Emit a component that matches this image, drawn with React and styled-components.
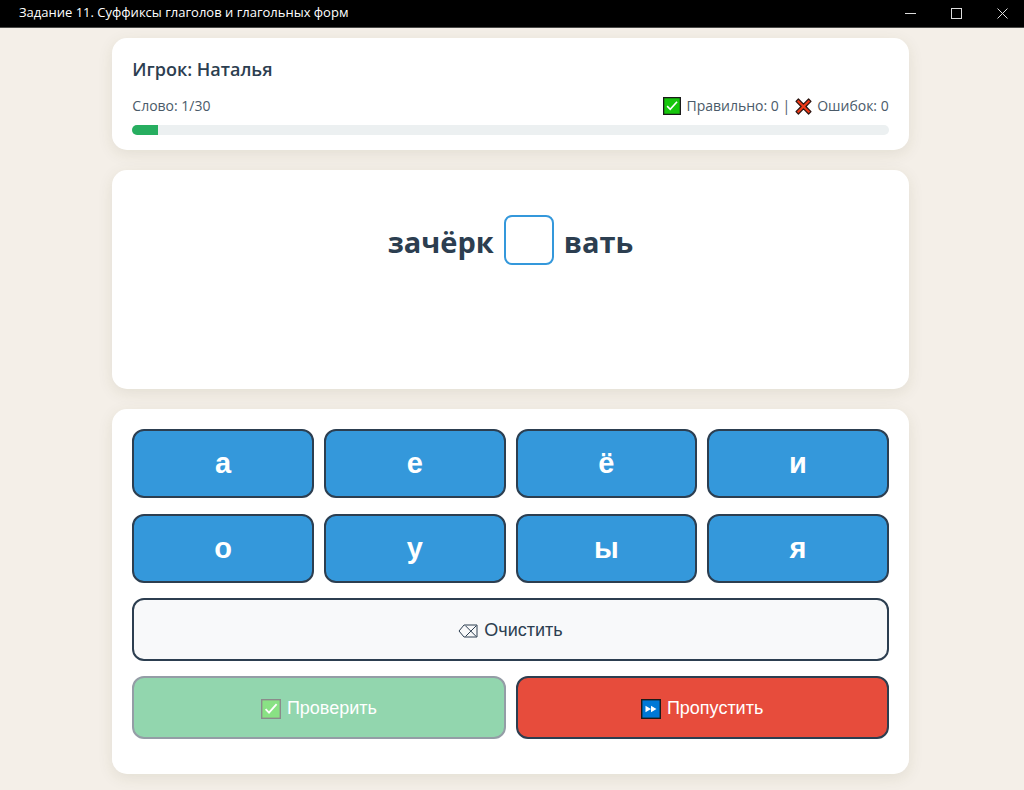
import React, { useState } from "react";
import styled, { createGlobalStyle } from "styled-components";

const GlobalStyle = createGlobalStyle`
  * {
    box-sizing: border-box;
  }

  body {
    margin: 0;
    background: #f4efe8;
    color: #2c3e50;
    font-family: "Open Sans", "Noto Sans", sans-serif;
  }
`;

const TitleBar = styled.header`
  display: flex;
  align-items: flex-start;
  justify-content: space-between;
  height: 28px;
  padding-left: 19px;
  background: #000;
  border-bottom: 1px solid #4a4a48;
  color: #fff;
`;

const WindowTitle = styled.span`
  font-size: 13px;
  line-height: 25px;
`;

const WindowControls = styled.div`
  display: flex;
  height: 100%;
`;

const WindowButton = styled.button`
  display: flex;
  align-items: center;
  justify-content: center;
  width: 46px;
  padding: 0 0 0 3px;
  border: none;
  background: transparent;
  color: #ddd;
`;

const Page = styled.main`
  display: flex;
  flex-direction: column;
  gap: 20px;
  width: 78%;
  max-width: 797px;
  margin: 0 auto;
  padding: 10px 0 16px;
`;

const Body = styled.div`
  padding-right: 3px;
`;

const Card = styled.section`
  padding: 20px;
  border-radius: 15px;
  background: #fff;
  box-shadow: 0 4px 15px rgba(80, 75, 30, 0.1);
`;

const HeaderCard = styled(Card)`
  padding-top: 16px;
  padding-bottom: 15px;
`;

const Player = styled.h1`
  margin: 0 0 12px;
  font-size: 18px;
  font-weight: 600;
  line-height: 30px;
`;

const Stats = styled.div`
  display: flex;
  justify-content: space-between;
  margin-bottom: 9px;
  color: #4a5a69;
  font-size: 14px;
  line-height: 20px;
`;

const Score = styled.div`
  display: flex;
  align-items: center;
  gap: 5px;
`;

const Track = styled.div`
  overflow: hidden;
  height: 10px;
  border-radius: 5px;
  background: #ecf0f1;
`;

const Fill = styled.div`
  height: 100%;
  background: #27ae60;
`;

const WordCard = styled(Card)`
  min-height: 219px;
  padding-top: 45px;
`;

const Word = styled.div`
  display: flex;
  align-items: center;
  justify-content: center;
  gap: 10px;
  font-size: 29px;
  font-weight: 700;
  line-height: 46px;
`;

const WordPart = styled.span`
  padding-top: 4px;
`;

const LetterBox = styled.input`
  width: 50px;
  height: 50px;
  padding: 0;
  border: 2px solid #3498db;
  border-radius: 8px;
  outline: none;
  background: #fff;
  color: #2c3e50;
  font: inherit;
  text-align: center;
`;

const KeysCard = styled(Card)`
  display: flex;
  flex-direction: column;
  gap: 15px;
  padding-bottom: 35px;
`;

const Letters = styled.div`
  display: grid;
  grid-template-columns: repeat(4, 1fr);
  gap: 16px 10px;
`;

const Actions = styled.div`
  display: grid;
  grid-template-columns: repeat(2, 1fr);
  gap: 10px;
`;

const Key = styled.button`
  height: 69px;
  padding: 0;
  border: 2px solid #2c3e50;
  border-radius: 12px;
  background: #3498db;
  color: #fff;
  font-family: "Liberation Sans", Arial, sans-serif;
  font-size: 29px;
  font-weight: 700;
  cursor: pointer;
`;

const kinds = {
  clear: { background: "#f8f9fa", color: "#2c3e50" },
  check: { background: "#27ae60", color: "#fff" },
  skip: { background: "#e74c3c", color: "#fff" },
};

const Action = styled.button`
  display: flex;
  align-items: center;
  justify-content: center;
  gap: 6px;
  height: 63px;
  padding: 2px 0 0;
  border: 2px solid #2c3e50;
  border-radius: 12px;
  background: ${({ $kind }) => kinds[$kind].background};
  color: ${({ $kind }) => kinds[$kind].color};
  font-family: "Liberation Sans", Arial, sans-serif;
  font-size: 18px;
  cursor: pointer;

  &:disabled {
    opacity: 0.5;
  }
`;

const CheckIcon = ({ size }) => (
  <svg width={size} height={size} viewBox="0 0 20 20" aria-hidden="true">
    <rect x="0.7" y="0.7" width="18.6" height="18.6" fill="#16c60c" stroke="#1a1a1a" strokeWidth="1.4" />
    <path d="M4.6 10.2 8 13.6 15.6 5.2" fill="none" stroke="#fff" strokeWidth="1.8" />
  </svg>
);

const CrossIcon = () => (
  <svg width="17" height="17" viewBox="0 0 17 17" aria-hidden="true">
    <path
      d="M3.4 1 8.5 6.1 13.6 1 16 3.4 10.9 8.5 16 13.6 13.6 16 8.5 10.9 3.4 16 1 13.6 6.1 8.5 1 3.4Z"
      fill="#f03a17"
      stroke="#2b1512"
      strokeWidth="1.2"
      strokeLinejoin="round"
    />
  </svg>
);

const SkipIcon = () => (
  <svg width="20" height="20" viewBox="0 0 20 20" aria-hidden="true">
    <rect x="0.7" y="0.7" width="18.6" height="18.6" fill="#0078d7" stroke="#1a1a1a" strokeWidth="1.4" />
    <path d="M4.5 6.8 10 10 4.5 13.2ZM10 6.8 15.5 10 10 13.2Z" fill="#fff" />
  </svg>
);

const EraseIcon = () => (
  <svg width="20" height="14" viewBox="0 0 20 14" aria-hidden="true">
    <path
      d="M6 1H19V13H6L1 7ZM7.5 1.8 18.2 12.5M18.2 1.8 7.5 12.5"
      fill="none"
      stroke="currentColor"
      strokeWidth="1"
    />
  </svg>
);

const letters = ["а", "е", "ё", "и", "о", "у", "ы", "я"];
const current = 1;
const total = 30;

const App = () => {
  const [letter, setLetter] = useState("");

  return (
    <>
      <GlobalStyle />
      <TitleBar>
        <WindowTitle>Задание 11. Суффиксы глаголов и глагольных форм</WindowTitle>
        <WindowControls>
          <WindowButton aria-label="Свернуть">
            <svg width="11" height="11" viewBox="0 0 11 11">
              <path d="M0 5.5H11" stroke="currentColor" />
            </svg>
          </WindowButton>
          <WindowButton aria-label="Развернуть">
            <svg width="11" height="11" viewBox="0 0 11 11">
              <rect x="0.5" y="0.5" width="10" height="10" fill="none" stroke="currentColor" />
            </svg>
          </WindowButton>
          <WindowButton aria-label="Закрыть">
            <svg width="11" height="11" viewBox="0 0 11 11">
              <path d="M0.5 0.5 10.5 10.5M10.5 0.5 0.5 10.5" stroke="currentColor" />
            </svg>
          </WindowButton>
        </WindowControls>
      </TitleBar>
      <Body>
        <Page>
          <HeaderCard>
            <Player>Игрок: Наталья</Player>
            <Stats>
              <span>
                Слово: {current}/{total}
              </span>
              <Score>
                <CheckIcon size={18} />
                <span>Правильно: 0 |</span>
                <CrossIcon />
                <span>Ошибок: 0</span>
              </Score>
            </Stats>
            <Track>
              <Fill style={{ width: `${(current / total) * 100}%` }} />
            </Track>
          </HeaderCard>

          <WordCard>
            <Word>
              <WordPart>зачёрк</WordPart>
              <LetterBox
                aria-label="Пропущенная буква"
                maxLength={1}
                value={letter}
                onChange={(e) => setLetter(e.target.value)}
              />
              <WordPart>вать</WordPart>
            </Word>
          </WordCard>

          <KeysCard>
            <Letters>
              {letters.map((item) => (
                <Key key={item} onClick={() => setLetter(item)}>
                  {item}
                </Key>
              ))}
            </Letters>
            <Action $kind="clear" onClick={() => setLetter("")}>
              <EraseIcon />
              Очистить
            </Action>
            <Actions>
              <Action $kind="check" disabled={!letter}>
                <CheckIcon size={20} />
                Проверить
              </Action>
              <Action $kind="skip" onClick={() => setLetter("")}>
                <SkipIcon />
                Пропустить
              </Action>
            </Actions>
          </KeysCard>
        </Page>
      </Body>
    </>
  );
};

export default App;
